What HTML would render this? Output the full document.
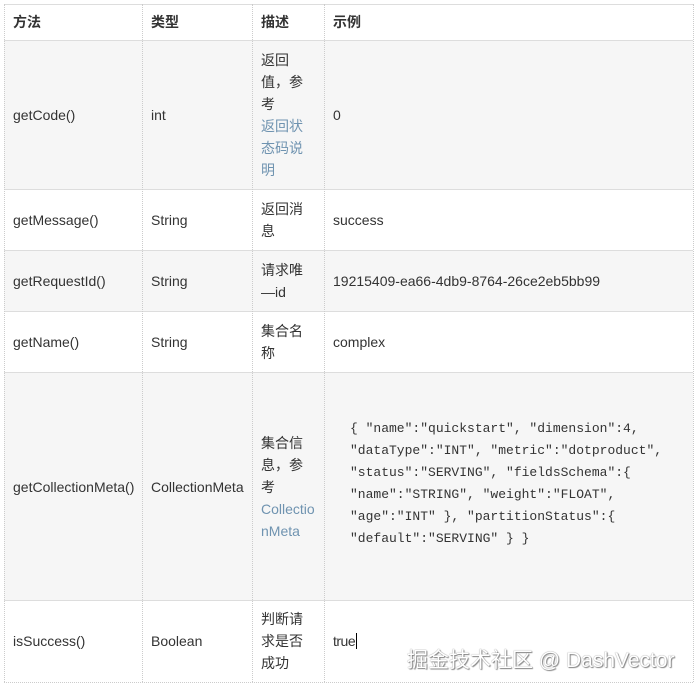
<!DOCTYPE html>
<html><head><meta charset="utf-8"><style>
body{margin:0;width:697px;height:688px;background:#fff;position:relative;overflow:hidden;font-family:"Liberation Sans","Noto Sans CJK SC",sans-serif;font-size:14px;color:#333}
.r{position:absolute;left:4px;width:689px;border-bottom:1px solid #ddd}
.g{background:#f6f6f6}
.v{position:absolute;top:4px;height:678px;border-left:1px dotted #ccc}
.t{position:absolute;line-height:22px}
.h{font-weight:bold;color:#333}
a{color:#6f93b0;text-decoration:none}
.code{position:absolute;left:350px;top:418px;font-family:"Liberation Mono",monospace;font-size:13px;line-height:22px;color:#333;white-space:pre}
.wm{position:absolute;left:407px;top:644px;font-size:21px;color:#fff;text-shadow:0 0 1px #666,1px 1px 1px #888;font-family:"Liberation Sans","Noto Sans CJK SC",sans-serif}
</style></head><body>
<div class="r" style="top:4px;height:0;border-bottom:1px solid #ddd"></div>
<div class="r" style="top:4px;height:36px;border-bottom:2px solid #ddd"></div>
<div class="r g" style="top:41px;height:148px"></div>
<div class="r" style="top:190px;height:60px"></div>
<div class="r g" style="top:251px;height:60px"></div>
<div class="r" style="top:312px;height:60px"></div>
<div class="r g" style="top:373px;height:227px"></div>
<div class="r" style="top:601px;height:81px;border-bottom:1px dotted #ccc"></div>
<div class="v" style="left:4px"></div>
<div class="v" style="left:142px"></div>
<div class="v" style="left:252px"></div>
<div class="v" style="left:324px"></div>
<div class="v" style="left:693px"></div>

<div class="t h" style="left:13px;top:11px">方法</div>
<div class="t h" style="left:151px;top:11px">类型</div>
<div class="t h" style="left:261px;top:11px">描述</div>
<div class="t h" style="left:333px;top:11px">示例</div>

<div class="t" style="left:13px;top:104px">getCode()</div>
<div class="t" style="left:151px;top:104px">int</div>
<div class="t" style="left:261px;top:49px;width:50px">返回<br>值，参<br>考<br><a>返回状<br>态码说<br>明</a></div>
<div class="t" style="left:333px;top:104px">0</div>

<div class="t" style="left:13px;top:209px">getMessage()</div>
<div class="t" style="left:151px;top:209px">String</div>
<div class="t" style="left:261px;top:198px">返回消<br>息</div>
<div class="t" style="left:333px;top:209px">success</div>

<div class="t" style="left:13px;top:270px">getRequestId()</div>
<div class="t" style="left:151px;top:270px">String</div>
<div class="t" style="left:261px;top:259px">请求唯<br>—id</div>
<div class="t" style="left:333px;top:270px">19215409-ea66-4db9-8764-26ce2eb5bb99</div>

<div class="t" style="left:13px;top:331px">getName()</div>
<div class="t" style="left:151px;top:331px">String</div>
<div class="t" style="left:261px;top:320px">集合名<br>称</div>
<div class="t" style="left:333px;top:331px">complex</div>

<div class="t" style="left:13px;top:476px">getCollectionMeta()</div>
<div class="t" style="left:151px;top:476px">CollectionMeta</div>
<div class="t" style="left:261px;top:432px">集合信<br>息，参<br>考<br><a>Collectio<br>nMeta</a></div>
<div class="code">{ "name":"quickstart", "dimension":4,
"dataType":"INT", "metric":"dotproduct",
"status":"SERVING", "fieldsSchema":{
"name":"STRING", "weight":"FLOAT",
"age":"INT" }, "partitionStatus":{
"default":"SERVING" } }</div>

<div class="t" style="left:13px;top:630px">isSuccess()</div>
<div class="t" style="left:151px;top:630px">Boolean</div>
<div class="t" style="left:261px;top:608px">判断请<br>求是否<br>成功</div>
<div class="t" style="left:333px;top:630px;letter-spacing:-0.5px">true<span style="border-left:1px solid #000;margin-left:1px"></span></div>
<div class="wm">掘金技术社区 @ DashVector</div>
</body></html>
